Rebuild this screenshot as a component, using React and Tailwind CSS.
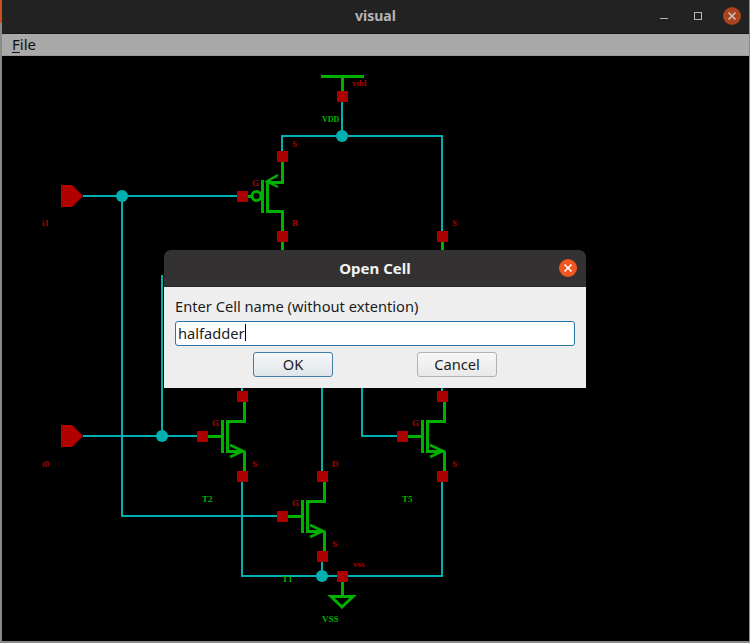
import React from "react";

const UI = '"Noto Sans", "Open Sans", sans-serif';
const SERIF = '"Liberation Serif", "DejaVu Serif", serif';
const GREEN = "#00b000";
const CYAN = "#00b0b0";
const RED = "#aa0000";

function Sq({ x, y }) {
  return <rect x={x} y={y} width="11" height="11" fill={RED} />;
}
function Dot({ x, y }) {
  return <circle cx={x} cy={y} r="6" fill={CYAN} />;
}
function Lbl({ x, y, c = RED, s = 9, children }) {
  return (
    <text x={x} y={y} fill={c} fontSize={s} fontWeight="700" fontFamily={SERIF}>
      {children}
    </text>
  );
}
function W({ d }) {
  return <path d={d} stroke={CYAN} strokeWidth="2" fill="none" />;
}
function G({ d, w = 3 }) {
  return <path d={d} stroke={GREEN} strokeWidth={w} fill="none" />;
}
function Nmos({ x, y }) {
  // x = gate square left, y = gate wire centre
  return (
    <g>
      <G d={`M${x + 11} ${y + 0.5}H${x + 25}`} />
      <G d={`M${x + 25.5} ${y - 16}V${y + 17}`} />
      <G d={`M${x + 47.5} ${y - 34}V${y - 14.5}H${x + 30.5}V${y + 15.5}H${x + 47}`} />
      <G d={`M${x + 47.5} ${y + 15}V${y + 35}`} />
      <G d={`M${x + 33} ${y + 9}L${x + 46} ${y + 15}L${x + 33} ${y + 21}`} w={2.5} />
      <Sq x={x} y={y - 5} />
      <Sq x={x + 40} y={y - 45} />
      <Sq x={x + 40} y={y + 35} />
    </g>
  );
}

function Schematic() {
  return (
    <svg width="747" height="585" viewBox="2 56 747 585" className="block">
      <W d="M342 102V136M282 155V136H442V232" />
      <W d="M83 196H240" />
      <W d="M122 196V516H280" />
      <W d="M83 436H200" />
      <W d="M162 275V436" />
      <W d="M242 480V576H442V480" />
      <W d="M322 388V475" />
      <W d="M322 560V576" />
      <W d="M362 388V436H400" />
      <W d="M242 388V392" />
      <W d="M442 388V392" />

      <G d="M321 76.5H364" />
      <G d="M342.5 76V92" />
      <Sq x={337} y={91} />
      <Lbl x={352} y={86}>vdd</Lbl>
      <Lbl x={322} y={122} c={GREEN} s={8}>VDD</Lbl>
      <Dot x={342} y={136} />
      <Lbl x={292} y={147}>S</Lbl>

      <G d="M282.5 162V182.5H267.5" />
      <G d="M262.5 180V213" />
      <G d="M267.5 181V211.5H282.5V232" />
      <G d="M278 175L267 181.5L278 187" w={2.5} />
      <circle cx="256.5" cy="196" r="4.5" stroke={GREEN} strokeWidth="3" fill="none" />
      <G d="M248 196.5H252" />
      <Sq x={277} y={151} />
      <Sq x={277} y={231} />
      <Sq x={237} y={191} />
      <Lbl x={252} y={186}>G</Lbl>
      <Lbl x={292} y={226}>B</Lbl>
      <G d="M282.5 242V252" />

      <Sq x={437} y={231} />
      <Lbl x={452} y={226}>S</Lbl>
      <G d="M442.5 242V252" />

      <polygon points="61,185 72,185 83,196 72,207 61,207" fill="#b00000" />
      <polygon points="61,425 72,425 83,436 72,447 61,447" fill="#b00000" />
      <Dot x={122} y={196} />
      <Dot x={162} y={436} />
      <Lbl x={42} y={226}>i1</Lbl>
      <Lbl x={42} y={467}>i0</Lbl>

      <Nmos x={197} y={436} />
      <Lbl x={212} y={426}>G</Lbl>
      <Lbl x={252} y={467}>S</Lbl>
      <Lbl x={202} y={502} c={GREEN}>T2</Lbl>

      <Nmos x={397} y={436} />
      <Lbl x={412} y={426}>G</Lbl>
      <Lbl x={452} y={467}>S</Lbl>
      <Lbl x={402} y={502} c={GREEN}>T5</Lbl>

      <Nmos x={277} y={516} />
      <Lbl x={332} y={467}>D</Lbl>
      <Lbl x={292} y={506}>G</Lbl>
      <Lbl x={332} y={547}>S</Lbl>
      <Lbl x={282} y={582} c={GREEN}>T1</Lbl>

      <Dot x={322} y={576} />
      <Sq x={337} y={571} />
      <Lbl x={353} y={567}>vss</Lbl>
      <G d="M342.5 582V596" />
      <G d="M331 596.5H353L342 607Z" />
      <Lbl x={322} y={622} c={GREEN}>VSS</Lbl>
    </svg>
  );
}

function CloseDot({ bg, fg }) {
  return (
    <span className="w-[18px] h-[18px] rounded-full flex items-center justify-center" style={{ background: bg }}>
      <svg width="10" height="10" viewBox="0 0 10 10">
        <path d="M1.5 1.5L8.5 8.5M8.5 1.5L1.5 8.5" stroke={fg} strokeWidth="1.6" />
      </svg>
    </span>
  );
}

export default function App() {
  return (
    <div className="relative w-[750px] h-[643px] overflow-hidden bg-[#8a8a8a]" style={{ fontFamily: UI }}>
      <div className="absolute left-0 top-0 w-[2px] h-[23px] bg-[#c8501e]" />
      <div className="ml-[2px] mr-[1px] flex flex-col h-[641px]">
        <div className="h-[33px] shrink-0 bg-[#232222] border-b border-[#161616] box-content flex items-center relative">
          <span className="w-full text-center text-[14px] font-bold text-[#b5b5b5] pb-[2px]">visual</span>
          <div className="absolute right-0 top-0 h-[31px] flex items-center">
            <svg width="10" height="10" viewBox="0 0 10 10" className="mr-[24px]">
              <path d="M1 7.5H9" stroke="#b5b5b5" strokeWidth="1" />
            </svg>
            <svg width="10" height="10" viewBox="0 0 10 10" className="mr-[20px]">
              <rect x="1.5" y="1.5" width="7" height="7" fill="none" stroke="#b5b5b5" strokeWidth="1" />
            </svg>
            <span className="mr-[8px]">
              <CloseDot bg="#a8431c" fg="#c9c2bd" />
            </span>
          </div>
        </div>
        <div className="h-[22px] shrink-0 bg-[#a9a9a9] border-b border-[#9a9a9a] flex items-center pl-[10px] text-[15px] text-[#111]">
          <span>
            <span className="underline underline-offset-2">F</span>ile
          </span>
        </div>
        <div className="flex-1 bg-black overflow-hidden">
          <Schematic />
        </div>
      </div>

      <div className="absolute left-[164px] top-[250px] w-[422px] h-[138px] flex flex-col">
        <div className="h-[37px] shrink-0 rounded-t-[7px] bg-[#333131] border-b border-[#262626] flex items-center justify-center relative">
          <span className="text-[15px] font-bold text-[#f2f2f2]">Open Cell</span>
          <span className="absolute right-[9px] top-[9px]">
            <CloseDot bg="#f0561f" fg="#ffffff" />
          </span>
        </div>
        <div className="flex-1 bg-[#eeeeee] px-[11px] flex flex-col">
          <div className="h-[34px] shrink-0 flex items-center pt-[3px] text-[14.67px] text-[#1c1c1c]">
            Enter Cell name (without extention)
          </div>
          <div className="h-[25px] w-[400px] shrink-0 bg-white border border-[#2b76a8] rounded-[3px] flex items-center pl-[2px] pb-[2px] text-[14.67px] text-[#1c1c1c]">
            halfadder
            <span className="inline-block w-px h-[17px] bg-black" />
          </div>
          <div className="flex mt-[6px]">
            <div className="ml-[78px] w-[80px] h-[25px] rounded-[3px] border border-[#3f7ea6] bg-gradient-to-b from-[#f6f8f9] to-[#dfe5e9] flex items-center justify-center pb-[2px] text-[14.67px] text-[#1c1c1c]">
              OK
            </div>
            <div className="ml-[84px] w-[80px] h-[25px] rounded-[3px] border border-[#b2b2b2] bg-gradient-to-b from-[#f7f7f7] to-[#e9e9e9] flex items-center justify-center pb-[2px] text-[14.67px] text-[#1c1c1c]">
              Cancel
            </div>
          </div>
        </div>
      </div>
    </div>
  );
}
